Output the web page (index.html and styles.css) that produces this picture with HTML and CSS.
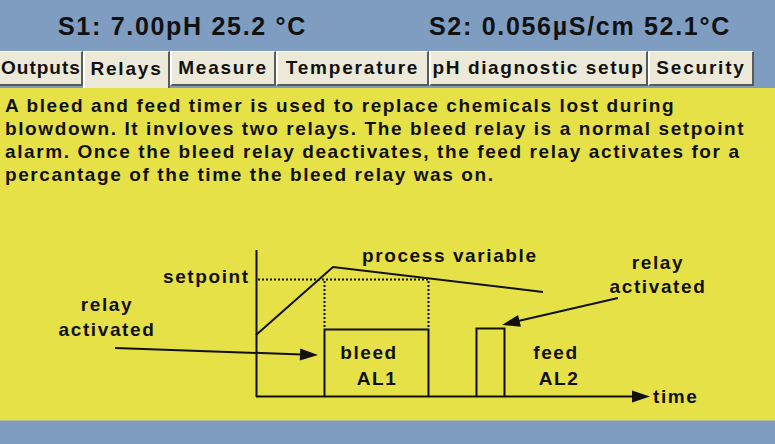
FILE: index.html
```html
<!DOCTYPE html>
<html lang="en">
<head>
    <meta charset="UTF-8">
    <title>Relays</title>
    <link rel="stylesheet" href="styles.css">
</head>
<body>
    <div class="screen">
        <div class="header">
            <span class="reading">S1: 7.00pH 25.2 °C</span>
            <span class="reading">S2: 0.056µS/cm 52.1°C</span>
        </div>

        <div class="tabs">
            <div class="tab tab-outputs">Outputs</div>
            <div class="tab tab-relays active">Relays</div>
            <div class="tab tab-measure">Measure</div>
            <div class="tab tab-temp">Temperature</div>
            <div class="tab tab-ph">pH diagnostic setup</div>
            <div class="tab tab-security">Security</div>
        </div>

        <div class="content">
            <p class="info">
                A bleed and feed timer is used to replace chemicals lost during<br>
                blowdown. It invloves two relays. The bleed relay is a normal setpoint<br>
                alarm. Once the bleed relay deactivates, the feed relay activates for a<br>
                percantage of the time the bleed relay was on.
            </p>

            <svg class="diagram" width="775" height="220" viewBox="0 200 775 220">
                <g class="solid">
                    <line x1="256.5" y1="250" x2="256.5" y2="397"/>
                    <line x1="256" y1="396.5" x2="634" y2="396.5"/>
                    <polyline points="256,335 333,267 543,292"/>
                    <polyline points="324.5,396 324.5,329.5 428.5,329.5 428.5,396"/>
                    <polyline points="476.5,396 476.5,328.5 504.5,328.5 504.5,396"/>
                    <line x1="115" y1="348" x2="302" y2="354.5"/>
                    <line x1="618" y1="298" x2="516" y2="321.5"/>
                </g>
                <g class="dotted">
                    <line x1="258" y1="279.5" x2="429" y2="279.5"/>
                    <line x1="324.5" y1="281" x2="324.5" y2="329"/>
                    <line x1="428.5" y1="281" x2="428.5" y2="329"/>
                </g>
                <g class="heads">
                    <polygon points="318,355 300.2,348.4 299.8,360.4"/>
                    <polygon points="502,325 518.1,315.1 520.9,326.7"/>
                    <polygon points="650,396.5 632,390.5 632,402.5"/>
                </g>
                <g class="labels">
                    <text x="362" y="262">process variable</text>
                    <text x="163" y="283">setpoint</text>
                    <text x="107" y="311" text-anchor="middle">relay</text>
                    <text x="107" y="336" text-anchor="middle">activated</text>
                    <text x="658" y="269" text-anchor="middle">relay</text>
                    <text x="658" y="293" text-anchor="middle">activated</text>
                    <text x="369" y="359" text-anchor="middle">bleed</text>
                    <text x="377" y="385" text-anchor="middle">AL1</text>
                    <text x="556" y="359" text-anchor="middle">feed</text>
                    <text x="559" y="385" text-anchor="middle">AL2</text>
                    <text x="653" y="403">time</text>
                </g>
            </svg>
        </div>

        <div class="footer"></div>
    </div>
</body>
</html>
```

FILE: styles.css
```css
* {
    box-sizing: border-box;
}

body {
    margin: 0;
    background: #7f9cc1;
    font-family: 'Liberation Sans', Arial, sans-serif;
    font-weight: bold;
    color: #111;
}

.screen {
    width: 775px;
    height: 444px;
    overflow: hidden;
    display: flex;
    flex-direction: column;
}

.header {
    height: 50px;
    display: grid;
    grid-template-columns: 371px 1fr;
    align-items: center;
    padding-left: 58px;
    padding-top: 2px;
    background: #7f9cc1;
}

.reading {
    font-size: 25px;
    letter-spacing: 1.7px;
    white-space: nowrap;
}

.tabs {
    height: 38px;
    display: flex;
    align-items: flex-start;
    padding-top: 1px;
    background: #7f9cc1;
}

.tab {
    height: 35px;
    display: flex;
    align-items: center;
    justify-content: center;
    background: #ece9d8;
    border-top: 1px solid #ffffff;
    border-left: 2px solid #ffffff;
    border-right: 2px solid #5a5a58;
    border-bottom: 2px solid #5a5a58;
    font-size: 19px;
    letter-spacing: 1.8px;
    white-space: nowrap;
    overflow: hidden;
}

.tab.active {
    height: 37px;
    padding-bottom: 2px;
    border-bottom: none;
}

.tab-outputs {
    width: 83px;
    justify-content: flex-start;
    padding-left: 1px;
    border-left: none;
    letter-spacing: 1px;
}

.tab-relays { width: 87px; }
.tab-measure { width: 106px; }
.tab-temp { width: 153px; }
.tab-ph { width: 219px; letter-spacing: 1.6px; }
.tab-security { width: 106px; }

.content {
    height: 332px;
    background: #e6e146;
}

.info {
    margin: 0;
    padding: 6px 0 0 5px;
    font-size: 19px;
    line-height: 23px;
    letter-spacing: 1.6px;
    white-space: nowrap;
}

.diagram {
    display: block;
    margin-top: 14px;
}

.solid line,
.solid polyline {
    fill: none;
    stroke: #111;
    stroke-width: 2;
}

.dotted line {
    stroke: #111;
    stroke-width: 2;
    stroke-dasharray: 2 2;
}

.heads polygon {
    fill: #111;
}

.labels text {
    font-family: 'Liberation Sans', Arial, sans-serif;
    font-weight: bold;
    font-size: 19px;
    letter-spacing: 1.6px;
    fill: #111;
}

.footer {
    height: 24px;
    border-top: 1px solid #b4b89c;
    background: #7f9cc1;
}
```
